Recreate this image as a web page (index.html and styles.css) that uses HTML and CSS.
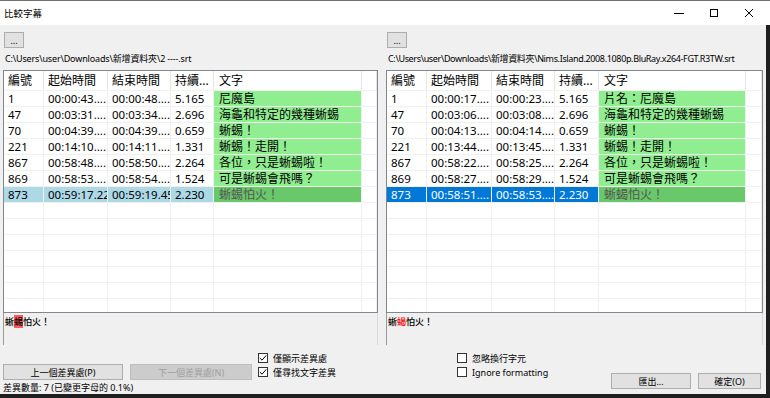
FILE: index.html
```html
<!DOCTYPE html>
<html>
<head>
    <title>比較字幕</title>
    <link rel="stylesheet" href="styles.css">
</head>
<body>
    <div class="window">
        <div class="titlebar">
            <span class="title">比較字幕</span>
            <div class="controls">
                <span class="ctl"><svg width="10" height="10" viewBox="0 0 10 10"><path d="M0 5.5h10" stroke="#000" stroke-width="1"/></svg></span>
                <span class="ctl"><svg width="10" height="10" viewBox="0 0 10 10"><rect x="1.5" y="1.5" width="7" height="7" fill="none" stroke="#000" stroke-width="1"/></svg></span>
                <span class="ctl"><svg width="10" height="10" viewBox="0 0 10 10"><path d="M1 1L9 9M9 1L1 9" stroke="#000" stroke-width="1"/></svg></span>
            </div>
        </div>

        <div class="content">
            <div class="panes">
                <!-- left file -->
                <div class="pane">
                    <button class="browse">...</button>
                    <div class="path">C:\Users\user\Downloads\新增資料夾\2 ----.srt</div>
                    <div class="list">
                        <div class="row head">
                            <div class="c">編號</div><div class="c">起始時間</div><div class="c">結束時間</div><div class="c">持續...</div><div class="c txt">文字</div><div class="c"></div>
                        </div>
                        <div class="row">
                            <div class="c">1</div><div class="c">00:00:43....</div><div class="c">00:00:48....</div><div class="c">5.165</div><div class="c txt diff">尼魔島</div><div class="c"></div>
                        </div>
                        <div class="row">
                            <div class="c">47</div><div class="c">00:03:31....</div><div class="c">00:03:34....</div><div class="c">2.696</div><div class="c txt diff">海龜和特定的幾種蜥蜴</div><div class="c"></div>
                        </div>
                        <div class="row">
                            <div class="c">70</div><div class="c">00:04:39....</div><div class="c">00:04:39....</div><div class="c">0.659</div><div class="c txt diff">蜥蜴！</div><div class="c"></div>
                        </div>
                        <div class="row">
                            <div class="c">221</div><div class="c">00:14:10....</div><div class="c">00:14:11....</div><div class="c">1.331</div><div class="c txt diff">蜥蜴！走開！</div><div class="c"></div>
                        </div>
                        <div class="row">
                            <div class="c">867</div><div class="c">00:58:48....</div><div class="c">00:58:50....</div><div class="c">2.264</div><div class="c txt diff">各位，只是蜥蜴啦！</div><div class="c"></div>
                        </div>
                        <div class="row">
                            <div class="c">869</div><div class="c">00:58:53....</div><div class="c">00:58:54....</div><div class="c">1.524</div><div class="c txt diff">可是蜥蜴會飛嗎？</div><div class="c"></div>
                        </div>
                        <div class="row focus">
                            <div class="c">873</div><div class="c">00:59:17.22</div><div class="c">00:59:19.45</div><div class="c">2.230</div><div class="c txt diff current">蜥蜴怕火！</div><div class="c"></div>
                        </div>
                        <div class="row"><div class="c"></div><div class="c"></div><div class="c"></div><div class="c"></div><div class="c"></div><div class="c"></div></div>
                        <div class="row"><div class="c"></div><div class="c"></div><div class="c"></div><div class="c"></div><div class="c"></div><div class="c"></div></div>
                        <div class="row"><div class="c"></div><div class="c"></div><div class="c"></div><div class="c"></div><div class="c"></div><div class="c"></div></div>
                        <div class="row"><div class="c"></div><div class="c"></div><div class="c"></div><div class="c"></div><div class="c"></div><div class="c"></div></div>
                        <div class="row"><div class="c"></div><div class="c"></div><div class="c"></div><div class="c"></div><div class="c"></div><div class="c"></div></div>
                        <div class="row"><div class="c"></div><div class="c"></div><div class="c"></div><div class="c"></div><div class="c"></div><div class="c"></div></div>
                        <div class="row"><div class="c"></div><div class="c"></div><div class="c"></div><div class="c"></div><div class="c"></div><div class="c"></div></div>
                        <div class="row"><div class="c"></div><div class="c"></div><div class="c"></div><div class="c"></div><div class="c"></div><div class="c"></div></div>
                    </div>
                    <div class="preview">蜥<span class="mark">蜴</span>怕火！</div>
                </div>

                <!-- right file -->
                <div class="pane right">
                    <button class="browse">...</button>
                    <div class="path long">C:\Users\user\Downloads\新增資料夾\Nims.Island.2008.1080p.BluRay.x264-FGT.R3TW.srt</div>
                    <div class="list">
                        <div class="row head">
                            <div class="c">編號</div><div class="c">起始時間</div><div class="c">結束時間</div><div class="c">持續...</div><div class="c txt">文字</div><div class="c"></div>
                        </div>
                        <div class="row">
                            <div class="c">1</div><div class="c">00:00:17....</div><div class="c">00:00:23....</div><div class="c">5.165</div><div class="c txt diff">片名：尼魔島</div><div class="c"></div>
                        </div>
                        <div class="row">
                            <div class="c">47</div><div class="c">00:03:06....</div><div class="c">00:03:08....</div><div class="c">2.696</div><div class="c txt diff">海龜和特定的幾種蜥蜴</div><div class="c"></div>
                        </div>
                        <div class="row">
                            <div class="c">70</div><div class="c">00:04:13....</div><div class="c">00:04:14....</div><div class="c">0.659</div><div class="c txt diff">蜥蜴！</div><div class="c"></div>
                        </div>
                        <div class="row">
                            <div class="c">221</div><div class="c">00:13:44....</div><div class="c">00:13:45....</div><div class="c">1.331</div><div class="c txt diff">蜥蜴！走開！</div><div class="c"></div>
                        </div>
                        <div class="row">
                            <div class="c">867</div><div class="c">00:58:22....</div><div class="c">00:58:25....</div><div class="c">2.264</div><div class="c txt diff">各位，只是蜥蜴啦！</div><div class="c"></div>
                        </div>
                        <div class="row">
                            <div class="c">869</div><div class="c">00:58:27....</div><div class="c">00:58:29....</div><div class="c">1.524</div><div class="c txt diff">可是蜥蜴會飛嗎？</div><div class="c"></div>
                        </div>
                        <div class="row selected">
                            <div class="c">873</div><div class="c">00:58:51....</div><div class="c">00:58:53....</div><div class="c">2.230</div><div class="c txt diff current">蜥蝎怕火！</div><div class="c"></div>
                        </div>
                        <div class="row"><div class="c"></div><div class="c"></div><div class="c"></div><div class="c"></div><div class="c"></div><div class="c"></div></div>
                        <div class="row"><div class="c"></div><div class="c"></div><div class="c"></div><div class="c"></div><div class="c"></div><div class="c"></div></div>
                        <div class="row"><div class="c"></div><div class="c"></div><div class="c"></div><div class="c"></div><div class="c"></div><div class="c"></div></div>
                        <div class="row"><div class="c"></div><div class="c"></div><div class="c"></div><div class="c"></div><div class="c"></div><div class="c"></div></div>
                        <div class="row"><div class="c"></div><div class="c"></div><div class="c"></div><div class="c"></div><div class="c"></div><div class="c"></div></div>
                        <div class="row"><div class="c"></div><div class="c"></div><div class="c"></div><div class="c"></div><div class="c"></div><div class="c"></div></div>
                        <div class="row"><div class="c"></div><div class="c"></div><div class="c"></div><div class="c"></div><div class="c"></div><div class="c"></div></div>
                        <div class="row"><div class="c"></div><div class="c"></div><div class="c"></div><div class="c"></div><div class="c"></div><div class="c"></div></div>
                    </div>
                    <div class="preview">蜥<span class="changed">蝎</span>怕火！</div>
                </div>
            </div>

            <div class="footer">
                <div class="nav">
                    <div class="nav-buttons">
                        <button class="btn prev">上一個差異處(P)</button>
                        <button class="btn next" disabled>下一個差異處(N)</button>
                    </div>
                    <div class="status">差異數量: 7 (已變更字母的 0.1%)</div>
                </div>
                <div class="opts">
                    <div class="opt"><span class="box"><svg width="8" height="8" viewBox="0 0 8 8"><path d="M0.8 4L3 6.2L7.2 1.4" fill="none" stroke="#000" stroke-width="1"/></svg></span>僅顯示差異處</div>
                    <div class="opt"><span class="box"><svg width="8" height="8" viewBox="0 0 8 8"><path d="M0.8 4L3 6.2L7.2 1.4" fill="none" stroke="#000" stroke-width="1"/></svg></span>僅尋找文字差異</div>
                </div>
                <div class="opts extra">
                    <div class="opt"><span class="box"></span>忽略換行字元</div>
                    <div class="opt"><span class="box"></span>Ignore formatting</div>
                </div>
                <div class="actions">
                    <button class="btn export">匯出...</button>
                    <button class="btn ok">確定(O)</button>
                </div>
            </div>
        </div>
    </div>
</body>
</html>
```

FILE: styles.css
```css
* {
    box-sizing: border-box;
}
body {
    margin: 0;
    width: 770px;
    height: 398px;
    overflow: hidden;
    background: #1f1f1f;
    font-family: "Noto Sans", "Noto Sans CJK TC", sans-serif;
    font-size: 9px;
    color: #000;
}
.window {
    width: 770px;
    height: 394px;
    display: flex;
    flex-direction: column;
}
.titlebar {
    height: 25px;
    background: #fff;
    border-top: 1px solid #707070;
    display: flex;
    align-items: center;
}
.title {
    flex: 1;
    padding-left: 4px;
    font-size: 9.5px;
}
.controls {
    display: flex;
    height: 100%;
    padding-right: 4px;
}
.ctl {
    width: 35px;
    display: flex;
    align-items: center;
    justify-content: center;
}
.content {
    flex: 1;
    margin-right: 4px;
    padding: 7px 0 0 3px;
    background: #f0f0f0;
    display: flex;
    flex-direction: column;
}
.panes {
    display: flex;
    gap: 8px;
}
.pane {
    width: 375px;
    display: flex;
    flex-direction: column;
}
.pane.right {
    width: 377px;
}
.browse {
    width: 20px;
    height: 16px;
    margin-left: 1px;
    padding: 2px 0 0;
    border: 1px solid #adadad;
    background: #e1e1e1;
    font: inherit;
    line-height: 12px;
}
.path {
    height: 22px;
    padding: 2px 0 0 2px;
    line-height: 18px;
    white-space: nowrap;
    letter-spacing: -0.15px;
}
.path.long {
    letter-spacing: -0.35px;
}
.list {
    height: 243px;
    border: 1px solid #828790;
    background: #fff;
    overflow: hidden;
    font-size: 12px;
}
.row {
    display: grid;
    grid-template-columns: 40px 64px 63px 43px 148px 1fr;
    height: 16px;
}
.right .row {
    grid-template-columns: 40px 65px 63px 44px 147px 1fr;
}
.row .c {
    border-top: 1px solid #f0f0f0;
    border-right: 1px solid #f0f0f0;
    padding-left: 4px;
    line-height: 15px;
    white-space: nowrap;
    overflow: hidden;
    font-size: 11.5px;
}
.row .txt {
    padding-left: 5px;
    font-size: 12px;
}
.row.head {
    height: 19px;
}
.row.head .c {
    border-top: 0;
    border-right-color: #e5e5e5;
    line-height: 19px;
    font-size: 12px;
}
.row .diff {
    background: #90ee90;
}
.row .current {
    background: #69c869;
    color: #555;
}
.focus .c:nth-child(-n+4) {
    background: #add8e6;
}
.selected .c:nth-child(-n+4) {
    background: #0078d7;
    color: #fff;
}
.preview {
    height: 32px;
    border-left: 1px solid #9a9a9a;
    border-right: 1px solid #dadada;
    padding: 3px 0 0 1px;
    line-height: 12px;
    font-weight: 500;
}
.mark {
    background: #ff5a5a;
}
.changed {
    color: #ff0000;
}
.footer {
    flex: 1;
    display: flex;
    padding-right: 5px;
}
.nav {
    flex: none;
    width: 249px;
    margin-right: 6px;
    padding-top: 19px;
}
.nav-buttons {
    display: flex;
    gap: 7px;
}
.btn {
    height: 16px;
    padding: 0;
    border: 1px solid #adadad;
    background: #e1e1e1;
    font: inherit;
    color: #000;
}
.btn:disabled {
    background: #cccccc;
    border-color: #bfbfbf;
    color: #a0a0a0;
}
.prev {
    width: 120px;
}
.next {
    width: 122px;
}
.status {
    margin-top: 2px;
    line-height: 12px;
    white-space: nowrap;
}
.opts {
    flex: none;
    width: 199px;
    padding-top: 6px;
}
.opts.extra {
    width: auto;
}
.opt {
    height: 14px;
    display: flex;
    align-items: center;
    gap: 5px;
    white-space: nowrap;
}
.box {
    width: 10px;
    height: 10px;
    border: 1px solid #333;
    background: #fff;
    display: flex;
}
.actions {
    margin-left: auto;
    padding-top: 28px;
    display: flex;
    gap: 7px;
}
.export {
    width: 80px;
}
.ok {
    width: 63px;
}
```
